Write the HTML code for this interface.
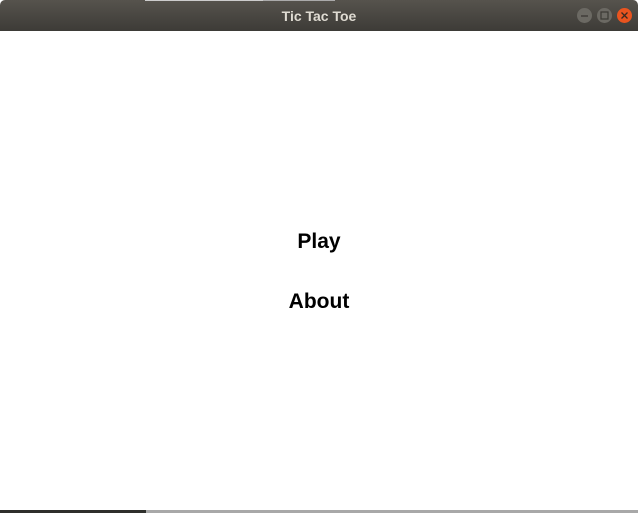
<!DOCTYPE html>
<html><head><style>
html,body{margin:0;padding:0;width:638px;height:513px;overflow:hidden;background:#fff;font-family:"Liberation Sans",sans-serif}
.tb{position:absolute;left:0;top:0;width:638px;height:31px;background:linear-gradient(#56534d,#3d3b37);border-radius:5px 5px 0 0}
.tl{position:absolute;left:145px;top:0;width:118px;height:1px;background:#ccc}
.tl2{position:absolute;left:263px;top:0;width:72px;height:1px;background:#aaa}
.t{position:absolute;top:8px;width:638px;text-align:center;color:#dfdbd2;font-weight:bold;font-size:14px}
.b{position:absolute;top:8px;width:15px;height:15px;border-radius:50%;background:#6b6963}
.b3{background:#e9541f}
.m{position:absolute;width:638px;text-align:center;font-weight:bold;font-size:21px;color:#000}
.bot1{position:absolute;left:0;top:510px;width:146px;height:3px;background:#2e2f2b}
.bot2{position:absolute;left:146px;top:510px;width:492px;height:3px;background:#a8a8a8}
</style></head><body>
<div class="tb"></div><div class="tl"></div><div class="tl2"></div>
<div class="t">Tic Tac Toe</div>
<div class="b" style="left:577px"></div>
<div class="b" style="left:597px"></div>
<div class="b b3" style="left:617px"></div>
<svg style="position:absolute;left:0;top:0" width="638" height="31">
<line x1="581" y1="16" x2="588" y2="16" stroke="#3a3834" stroke-width="1.3"/>
<rect x="601" y="12" width="7" height="7" fill="none" stroke="#3a3834" stroke-width="1.2"/>
<path d="M621.5 12.5l6 6M627.5 12.5l-6 6" stroke="#3a2a20" stroke-width="1.3"/>
</svg>
<div class="m" style="top:230px">Play</div>
<div class="m" style="top:290px">About</div>
<div class="bot1"></div><div class="bot2"></div>
</body></html>
